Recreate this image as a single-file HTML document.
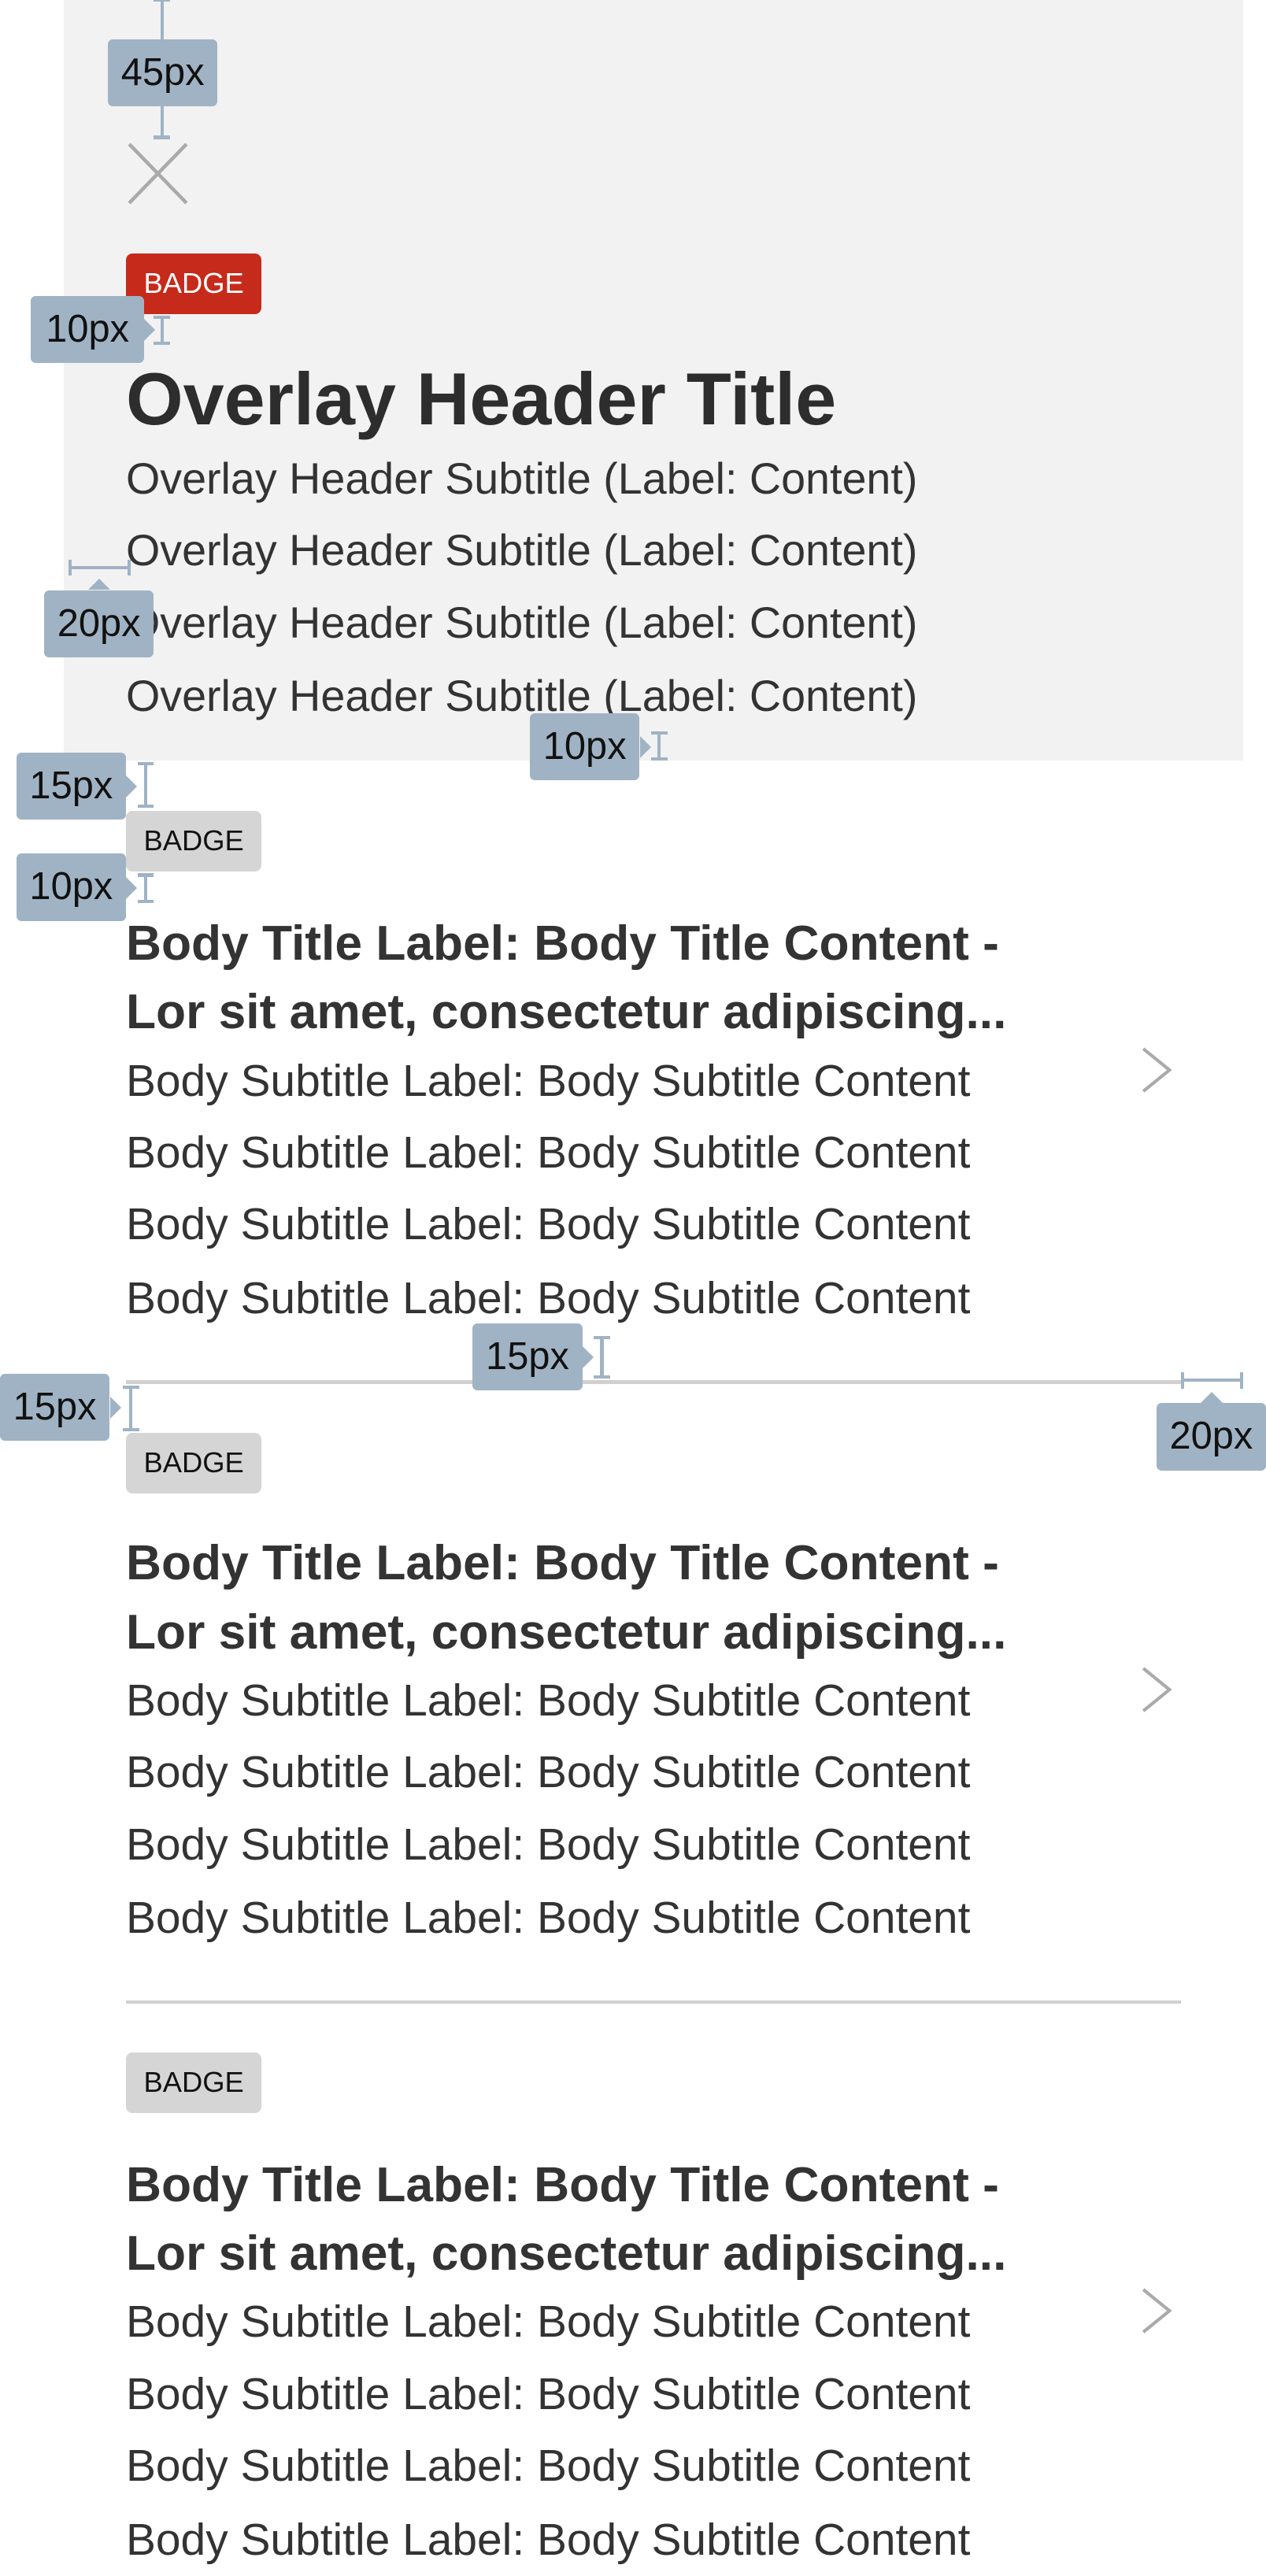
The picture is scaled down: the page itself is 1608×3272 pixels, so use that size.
<!DOCTYPE html>
<html><head><meta charset="utf-8">
<style>
html,body{margin:0;padding:0;background:#fff;}
body{width:1608px;height:3256px;overflow:hidden;position:relative;}
#w{position:absolute;left:0;top:0;width:774px;height:1568px;zoom:2.0775;font-family:"Liberation Sans",Arial,sans-serif;color:#333;}
.a{position:absolute;}
.panel{left:39px;top:0;width:721px;height:465px;background:#f2f2f2;}
.badge{position:absolute;left:77px;width:83px;height:37px;border-radius:4px;font-size:17.5px;line-height:37px;text-align:center;}
.red{background:#c62a1b;color:#fff;}
.gray{background:#d5d5d5;color:#111;}
.h1{left:77px;top:216px;font-size:45px;font-weight:bold;line-height:56px;white-space:nowrap;color:#2d2d2d;}
.sub{position:absolute;left:77px;font-size:26.8px;line-height:44px;white-space:nowrap;color:#333;}
.bs{font-size:27.4px;}
.bt{position:absolute;left:77px;font-size:30px;font-weight:bold;line-height:42px;white-space:nowrap;color:#333;}
.div{position:absolute;left:77px;width:645px;height:2px;background:#d0d0d0;}
.lab{position:absolute;background:#a0b3c4;border-radius:3px;height:41px;width:67px;font-size:23.5px;line-height:41px;text-align:center;color:#111;}
.vm{position:absolute;width:2px;background:#a0b3c4;}
.vm:before,.vm:after{content:"";position:absolute;left:-4px;width:10px;height:2px;background:#a0b3c4;}
.vm:before{top:0}.vm:after{bottom:0}
.hm{position:absolute;height:2px;background:#a0b3c4;}
.hm:before,.hm:after{content:"";position:absolute;top:-4px;width:2px;height:10px;background:#a0b3c4;}
.hm:before{left:0}.hm:after{right:0}
.ar{position:absolute;right:-7px;top:14px;width:0;height:0;border-top:7px solid transparent;border-bottom:7px solid transparent;border-left:7px solid #a0b3c4;}
.au{position:absolute;left:27px;top:-7px;width:0;height:0;border-left:7px solid transparent;border-right:7px solid transparent;border-bottom:7px solid #a0b3c4;}
</style></head><body>
<div id="w">
<div class="a panel"></div>

<svg class="a" style="left:77px;top:87px" width="39" height="38" viewBox="0 0 39 38"><path d="M2 1 L37 37 M37 1 L2 37" stroke="#aaa" stroke-width="2.2" fill="none"/></svg>

<div class="badge red" style="top:155px">BADGE</div>
<div class="a h1">Overlay Header Title</div>
<div class="sub" style="top:271px">Overlay Header Subtitle (Label: Content)</div>
<div class="sub" style="top:315px">Overlay Header Subtitle (Label: Content)</div>
<div class="sub" style="top:359px">Overlay Header Subtitle (Label: Content)</div>
<div class="sub" style="top:404px">Overlay Header Subtitle (Label: Content)</div>

<div class="badge gray" style="top:496px">BADGE</div>
<div class="bt" style="top:556px">Body Title Label: Body Title Content -</div>
<div class="bt" style="top:598px">Lor sit amet, consectetur adipiscing...</div>
<div class="sub bs" style="top:639px">Body Subtitle Label: Body Subtitle Content</div>
<div class="sub bs" style="top:683px">Body Subtitle Label: Body Subtitle Content</div>
<div class="sub bs" style="top:727px">Body Subtitle Label: Body Subtitle Content</div>
<div class="sub bs" style="top:772px">Body Subtitle Label: Body Subtitle Content</div>
<svg class="a" style="left:697px;top:639px" width="22" height="30" viewBox="0 0 22 30"><path d="M2 2 L18 15 L2 28" stroke="#aaa" stroke-width="2" fill="none"/></svg>
<div class="div" style="top:844px"></div>

<div class="badge gray" style="top:876px">BADGE</div>
<div class="bt" style="top:935px">Body Title Label: Body Title Content -</div>
<div class="bt" style="top:977px">Lor sit amet, consectetur adipiscing...</div>
<div class="sub bs" style="top:1018px">Body Subtitle Label: Body Subtitle Content</div>
<div class="sub bs" style="top:1062px">Body Subtitle Label: Body Subtitle Content</div>
<div class="sub bs" style="top:1106px">Body Subtitle Label: Body Subtitle Content</div>
<div class="sub bs" style="top:1151px">Body Subtitle Label: Body Subtitle Content</div>
<svg class="a" style="left:697px;top:1018px" width="22" height="30" viewBox="0 0 22 30"><path d="M2 2 L18 15 L2 28" stroke="#aaa" stroke-width="2" fill="none"/></svg>
<div class="div" style="top:1223px"></div>

<div class="badge gray" style="top:1255px">BADGE</div>
<div class="bt" style="top:1315px">Body Title Label: Body Title Content -</div>
<div class="bt" style="top:1357px">Lor sit amet, consectetur adipiscing...</div>
<div class="sub bs" style="top:1398px">Body Subtitle Label: Body Subtitle Content</div>
<div class="sub bs" style="top:1442px">Body Subtitle Label: Body Subtitle Content</div>
<div class="sub bs" style="top:1486px">Body Subtitle Label: Body Subtitle Content</div>
<div class="sub bs" style="top:1531px">Body Subtitle Label: Body Subtitle Content</div>
<svg class="a" style="left:697px;top:1398px" width="22" height="30" viewBox="0 0 22 30"><path d="M2 2 L18 15 L2 28" stroke="#aaa" stroke-width="2" fill="none"/></svg>

<div class="vm" style="left:98px;top:-1px;height:86px"></div>
<div class="lab" style="left:66px;top:24px">45px</div>

<div class="vm" style="left:98px;top:193px;height:18px"></div>
<div class="lab" style="left:19px;top:181px;width:69px">10px<div class="ar"></div></div>

<div class="hm" style="left:42px;top:346px;width:38px"></div>
<div class="lab" style="left:27px;top:361px">20px<div class="au"></div></div>

<div class="vm" style="left:402px;top:447px;height:18px"></div>
<div class="lab" style="left:324px;top:436px">10px<div class="ar"></div></div>

<div class="vm" style="left:88px;top:466px;height:28px"></div>
<div class="lab" style="left:10px;top:460px">15px<div class="ar"></div></div>

<div class="vm" style="left:88px;top:534px;height:18px"></div>
<div class="lab" style="left:10px;top:522px">10px<div class="ar"></div></div>

<div class="vm" style="left:367px;top:817px;height:26px"></div>
<div class="lab" style="left:289px;top:809px">15px<div class="ar"></div></div>

<div class="vm" style="left:79px;top:847px;height:28px"></div>
<div class="lab" style="left:0px;top:840px">15px<div class="ar"></div></div>

<div class="hm" style="left:722px;top:843px;width:38px"></div>
<div class="lab" style="left:707px;top:858px">20px<div class="au"></div></div>
</div>
</body></html>
